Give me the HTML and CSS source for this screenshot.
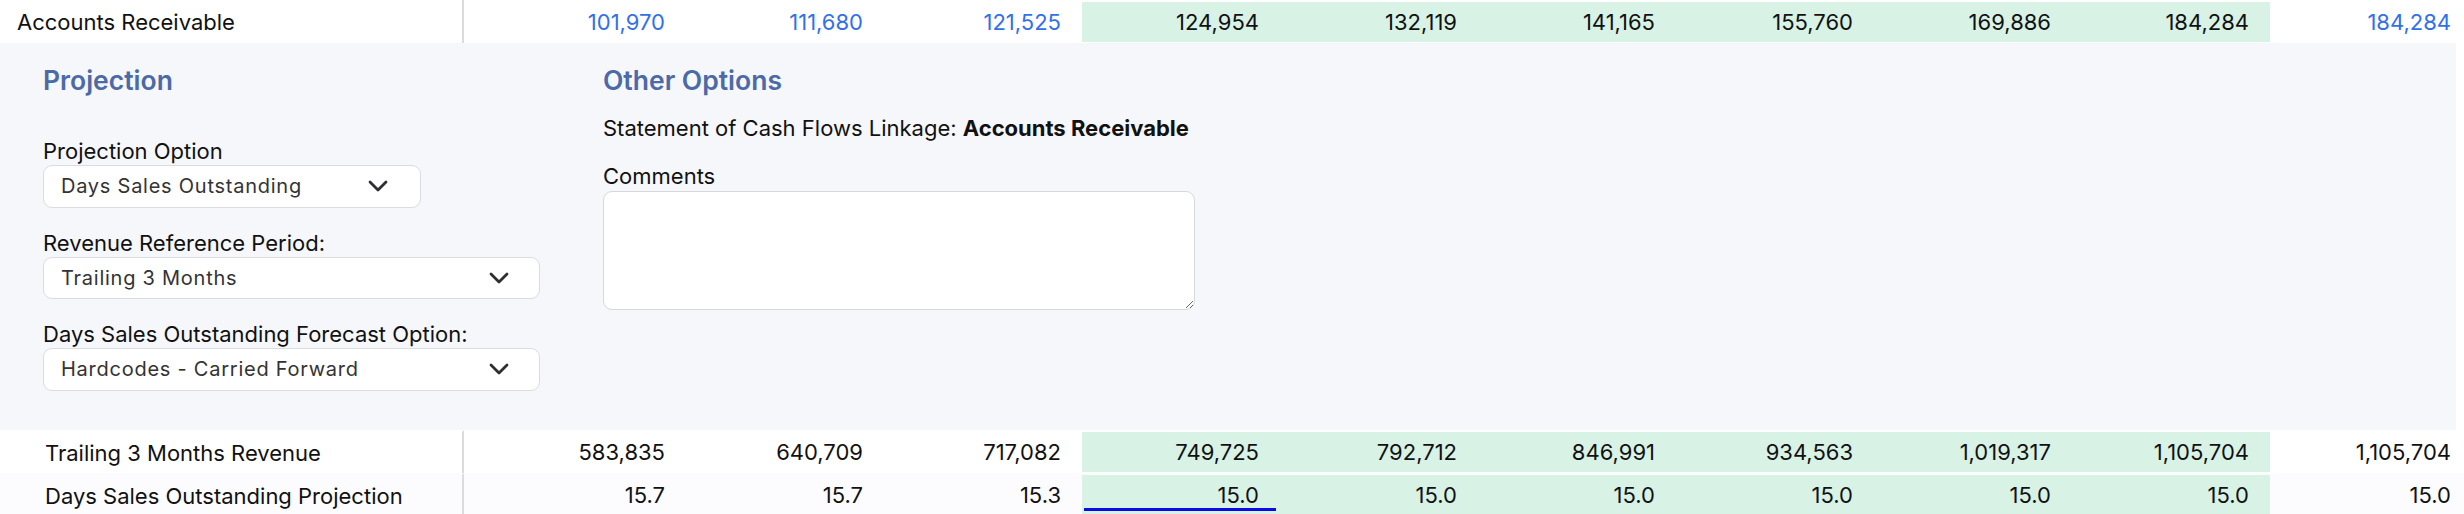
FILE: index.html
```html
<!DOCTYPE html>
<html lang="en">
<head>
<meta charset="utf-8">
<title>Accounts Receivable</title>
<link rel="stylesheet" href="styles.css">
</head>
<body>
<div class="sheet">
  <div class="row row-main">
    <div class="label">Accounts Receivable</div>
    <div class="spacer"></div>
    <div class="num hist">101,970</div>
    <div class="num hist">111,680</div>
    <div class="num hist">121,525</div>
    <div class="num proj">124,954</div>
    <div class="num proj">132,119</div>
    <div class="num proj">141,165</div>
    <div class="num proj">155,760</div>
    <div class="num proj">169,886</div>
    <div class="num proj">184,284</div>
    <div class="num final hist">184,284</div>
  </div>

  <div class="panel">
    <div class="panel-col col-left">
      <h3 class="panel-title">Projection</h3>
      <div class="field field-first">
        <div class="field-label">Projection Option</div>
        <div class="select select-narrow">
          <span>Days Sales Outstanding</span>
          <svg class="chev" viewBox="0 0 20 12" width="20" height="12"><path d="M2 2 L10 10 L18 2" /></svg>
        </div>
      </div>
      <div class="field">
        <div class="field-label">Revenue Reference Period:</div>
        <div class="select">
          <span>Trailing 3 Months</span>
          <svg class="chev" viewBox="0 0 20 12" width="20" height="12"><path d="M2 2 L10 10 L18 2" /></svg>
        </div>
      </div>
      <div class="field">
        <div class="field-label">Days Sales Outstanding Forecast Option:</div>
        <div class="select">
          <span>Hardcodes - Carried Forward</span>
          <svg class="chev" viewBox="0 0 20 12" width="20" height="12"><path d="M2 2 L10 10 L18 2" /></svg>
        </div>
      </div>
    </div>
    <div class="panel-col col-right">
      <h3 class="panel-title">Other Options</h3>
      <p class="linkage">Statement of Cash Flows Linkage: <b>Accounts Receivable</b></p>
      <div class="field-label comments-label">Comments</div>
      <textarea class="comments"></textarea>
    </div>
  </div>

  <div class="row row-sub">
    <div class="label">Trailing 3 Months Revenue</div>
    <div class="spacer"></div>
    <div class="num">583,835</div>
    <div class="num">640,709</div>
    <div class="num">717,082</div>
    <div class="num proj">749,725</div>
    <div class="num proj">792,712</div>
    <div class="num proj">846,991</div>
    <div class="num proj">934,563</div>
    <div class="num proj">1,019,317</div>
    <div class="num proj">1,105,704</div>
    <div class="num final">1,105,704</div>
  </div>
  <div class="row row-sub row-alt">
    <div class="label">Days Sales Outstanding Projection</div>
    <div class="spacer"></div>
    <div class="num">15.7</div>
    <div class="num">15.7</div>
    <div class="num">15.3</div>
    <div class="num proj editing">15.0</div>
    <div class="num proj">15.0</div>
    <div class="num proj">15.0</div>
    <div class="num proj">15.0</div>
    <div class="num proj">15.0</div>
    <div class="num proj">15.0</div>
    <div class="num final">15.0</div>
  </div>
</div>
</body>
</html>
```

FILE: styles.css
```css
* {
  box-sizing: border-box;
}

html,
body {
  margin: 0;
  padding: 0;
  background: #ffffff;
}

body {
  width: 2464px;
  height: 514px;
  overflow: hidden;
  font-family: Inter, "Noto Sans", "Liberation Sans", sans-serif;
  font-size: 22px;
  color: #111111;
}

.sheet {
  width: 2464px;
}

.row {
  display: grid;
  grid-template-columns: 464px 24px repeat(9, 198px) 1fr;
  height: 43px;
  background: #ffffff;
}

.row-alt {
  background: #fcfcfe;
}

.label {
  display: flex;
  align-items: center;
  padding-left: 17px;
  border-right: 2px solid #dcdcdc;
  white-space: nowrap;
}

.row-sub .label {
  padding-left: 45px;
  border-top: 2px solid #ffffff;
}

.row-alt .label {
  border-top-color: #fcfcfe;
}

.num {
  display: flex;
  align-items: center;
  justify-content: flex-end;
  padding-right: 21px;
  border-top: 2px solid transparent;
  border-bottom: 1px solid transparent;
  background-clip: padding-box;
  white-space: nowrap;
}

.hist {
  color: #3170e8;
}

.proj {
  background-color: #d8f2e6;
}

.final {
  padding-right: 13px;
}

.editing {
  position: relative;
}

.editing::after {
  content: "";
  position: absolute;
  left: 2px;
  right: 4px;
  bottom: 4px;
  height: 3px;
  background: #0b0be6;
}

/* Panel */
.panel {
  display: flex;
  gap: 63px;
  height: 387px;
  margin-right: 8px;
  padding: 22px 0 0 43px;
  background: #f6f7fb;
}

.panel-col {
  display: flex;
  flex-direction: column;
}

.col-left {
  width: 497px;
}

.col-right {
  width: 592px;
}

.panel-title {
  margin: 0;
  font-size: 26.5px;
  line-height: 31px;
  font-weight: 600;
  color: #4b6aa7;
}

.field {
  margin-top: 22px;
}

.field-first {
  margin-top: 42px;
}

.field-label {
  line-height: 27px;
  white-space: nowrap;
}

.select {
  display: flex;
  align-items: center;
  justify-content: space-between;
  height: 42.6px;
  padding: 0 30px 0 17px;
  background: #ffffff;
  border: 1.5px solid #dadce2;
  border-radius: 9px;
  font-size: 20px;
  color: #333333;
  letter-spacing: 0.75px;
}

.select-narrow {
  width: 378px;
  padding-right: 32px;
}

.chev {
  flex: none;
}

.chev path {
  fill: none;
  stroke: #2e2e33;
  stroke-width: 2.8;
  stroke-linecap: round;
  stroke-linejoin: round;
}

.linkage {
  margin: 19px 0 0;
  line-height: 27px;
  white-space: nowrap;
}

.linkage b {
  font-weight: 700;
}

.comments-label {
  margin-top: 21px;
}

.comments {
  display: block;
  width: 592px;
  height: 118.6px;
  margin: 1px 0 0;
  background: #ffffff;
  border: 1.5px solid #d6d8de;
  border-radius: 9px;
  resize: both;
  font-family: inherit;
}
```
